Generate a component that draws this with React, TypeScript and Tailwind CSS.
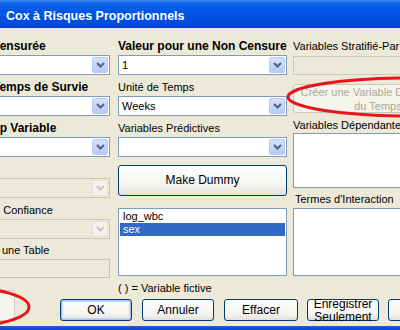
import clsx from "clsx";

type ComboProps = { value?: string; disabled?: boolean; className?: string };

// XP style drop-down arrow
function Chevron({ disabled }: { disabled?: boolean }) {
  return (
    <svg width="9" height="6" viewBox="0 0 9 6">
      <path
        d="M1 1 L4.5 4.5 L8 1"
        stroke={disabled ? "#cbc8bb" : "#4d6185"}
        strokeWidth="2"
        fill="none"
      />
    </svg>
  );
}

function Combo({ value, disabled, className }: ComboProps) {
  return (
    <div
      className={clsx(
        "flex h-[20px] items-stretch border p-[1px]",
        disabled ? "border-[#c9c7ba] bg-[#ece9d8]" : "border-[#7f9db9] bg-white",
        className
      )}
    >
      <span className="flex-1 pl-[2px] text-[11px] leading-[16px] text-black">{value}</span>
      <div
        className={clsx(
          "flex w-[16px] items-center justify-center rounded-[2px] border",
          disabled
            ? "border-[#e3e1d8] bg-[#f2f1eb]"
            : "border-[#b9cbf3] bg-[linear-gradient(to_bottom,#d5e1fc,#b7c9f6)]"
        )}
      >
        <Chevron disabled={disabled} />
      </div>
    </div>
  );
}

function ListBox({ items, selected, className }: { items: string[]; selected?: string; className?: string }) {
  return (
    <div className={clsx("overflow-hidden border border-[#7f9db9] bg-white p-[1px]", className)}>
      {items.map((item) => (
        <div
          key={item}
          className={clsx(
            "h-[13px] pl-[3px] text-[11px] leading-[13px]",
            item === selected ? "bg-[#316ac5] text-white" : "text-black"
          )}
        >
          {item}
        </div>
      ))}
    </div>
  );
}

function XpButton({
  children,
  className,
  isDefault,
}: {
  children: React.ReactNode;
  className?: string;
  isDefault?: boolean;
}) {
  return (
    <div
      className={clsx(
        "flex shrink-0 items-center justify-center rounded-[3px] border border-[#003c74] bg-[linear-gradient(to_bottom,#ffffff,#f3f3ef_70%,#e3e0d6)] text-center text-[12px] leading-[13px] text-black",
        isDefault && "shadow-[inset_0_0_0_1px_#a8c3f0,inset_0_0_0_2px_#c9daf8]",
        className
      )}
    >
      {children}
    </div>
  );
}

const label = "h-[16px] whitespace-nowrap text-[11px] leading-[16px] text-black";
const boldLabel = "h-[16px] whitespace-nowrap text-[12px] font-bold leading-[16px] text-black";

export default function App() {
  return (
    <div className="relative h-[330px] w-[400px] overflow-hidden bg-[#ece9d8] [font-family:'Liberation_Sans',Arial,sans-serif]">
      {/* title bar */}
      <div className="flex h-[28px] items-center bg-[linear-gradient(to_bottom,#3d8bf7_0%,#0a5fea_14%,#0054e3_50%,#004bd9_90%,#003fc4_100%)] pl-[6px] pt-[5px]">
        <span className="whitespace-nowrap text-[12.5px] font-bold text-white">
          Cox à Risques Proportionnels
        </span>
      </div>

      <div className="flex items-start">
        {/* column 1, cut at the left edge */}
        <div className="flex w-[110px] shrink-0 flex-col pt-[10px]">
          <div className={clsx(boldLabel, "-ml-[9px]")}>Censurée</div>
          <Combo className="-ml-[12px] mt-[1px] w-[122px]" />
          <div className={clsx(boldLabel, "-ml-[7px] mt-[4px]")}>Temps de Survie</div>
          <Combo className="-ml-[12px] mt-[1px] w-[122px]" />
          <div className={clsx(boldLabel, "-ml-[29px] mt-[4px]")}>Group Variable</div>
          <Combo className="-ml-[12px] mt-[1px] w-[122px]" />
          <div className="mt-[4px] h-[16px]" />
          <Combo disabled className="-ml-[12px] mt-[1px] w-[122px]" />
          <div className={clsx(label, "-ml-[12px] mt-[4px]")}>de Confiance</div>
          <Combo disabled className="-ml-[12px] mt-[1px] w-[122px]" />
          <div className={clsx(label, "-ml-[25px] mt-[3px]")}>dans une Table</div>
          <div className="-ml-[12px] mt-[1px] h-[19px] w-[122px] border border-[#c2c3bd] bg-[#ece9d8]" />
        </div>

        {/* column 2 */}
        <div className="ml-[8px] flex w-[169px] shrink-0 flex-col pt-[10px]">
          <div className={boldLabel}>Valeur pour une Non Censure</div>
          <Combo value="1" className="mt-[1px]" />
          <div className={clsx(label, "mt-[4px]")}>Unité de Temps</div>
          <Combo value="Weeks" className="mt-[1px]" />
          <div className={clsx(label, "mt-[4px]")}>Variables Prédictives</div>
          <Combo className="mt-[1px]" />
          <XpButton className="mt-[8px] h-[31px] text-[11px]">Make Dummy</XpButton>
          <ListBox items={["log_wbc", "sex"]} selected="sex" className="mt-[12px] h-[68px]" />
          <div className={clsx(label, "mt-[4px]")}>( ) = Variable fictive</div>
        </div>

        {/* column 3, cut at the right edge */}
        <div className="ml-[6px] flex w-[170px] shrink-0 flex-col pt-[10px]">
          <div className={label}>Variables Stratifié-Par</div>
          <div className="mt-[2px] h-[19px] border border-[#c9c7ba] bg-[#ece9d8]" />
          <div className="mt-[9px] flex h-[29px] flex-col items-center justify-center rounded-[3px] border border-[#c9c7ba] bg-[#f5f4ea] text-center text-[11px] leading-[14px] text-[#aca899]">
            <span className="whitespace-nowrap">Créer une Variable Dépendante</span>
            <span>du Temps</span>
          </div>
          <div className={clsx(label, "mt-[4px]")}>Variables Dépendantes:</div>
          <ListBox items={[]} className="h-[55px]" />
          <div className={clsx(label, "ml-[2px] mt-[3px]")}>Termes d'Interaction</div>
          <ListBox items={[]} className="mt-[1px] h-[68px]" />
        </div>
      </div>

      {/* bottom button row */}
      <div className="mt-[3px] flex items-start">
        <div className="-ml-[60px] h-[31px] w-[75px] shrink-0 -translate-y-[9px] border border-[#d4d0c8] bg-[#f4f3ee]" />
        <XpButton isDefault className="ml-[45px] h-[22px] w-[72px]">OK</XpButton>
        <XpButton className="ml-[10px] h-[22px] w-[72px]">Annuler</XpButton>
        <XpButton className="ml-[10px] h-[22px] w-[74px]">Effacer</XpButton>
        <XpButton className="ml-[9px] h-[22px] w-[72px] pt-[1px]">
          Enregistrer
          <br />
          Seulement
        </XpButton>
        <XpButton className="ml-[9px] h-[22px] w-[72px]">Aide</XpButton>
      </div>

      {/* window frame bottom edge */}
      <div className="absolute bottom-0 left-0 h-[4px] w-full bg-[linear-gradient(to_bottom,#1f5fe0,#0a3fc9)]" />

      {/* red annotation ellipses */}
      <svg className="pointer-events-none absolute left-0 top-0" width="400" height="330">
        <ellipse cx="412" cy="97" rx="124" ry="19" fill="none" stroke="#e8161c" strokeWidth="3" />
        <ellipse cx="-42" cy="307" rx="71" ry="20" fill="none" stroke="#e8161c" strokeWidth="3" />
      </svg>
    </div>
  );
}
